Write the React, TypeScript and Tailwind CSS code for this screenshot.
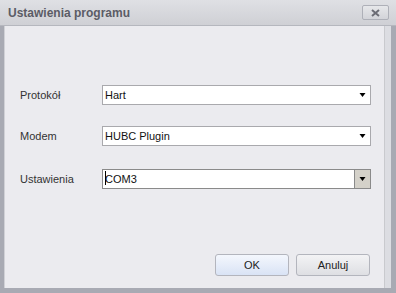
import React from "react";

function Arrow() {
  return (
    <svg width="7" height="4" viewBox="0 0 7 4" className="block">
      <path d="M0.5 0 H6.5 L3.5 4 Z" fill="#000" />
    </svg>
  );
}

function Field({ label, value, boxed, caret }: { label: string; value: string; boxed?: boolean; caret?: boolean }) {
  return (
    <div className="flex items-center h-[20px]">
      <div className="w-[97px] pl-[15px] text-[11px] text-[#333]">{label}</div>
      <div
        className={
          "flex h-[20px] w-[269px] items-center bg-white border " +
          (boxed ? "border-[#8a8a8a]" : "border-[#a9a9ad]")
        }
      >
        <div className="relative flex-1 pl-[2px] text-[11px] text-[#111] leading-none">
          {caret && <span className="absolute left-[2px] top-[-3px] h-[14px] w-[1px] bg-black" />}
          {value}
        </div>
        {boxed ? (
          <div className="flex h-full w-[16px] items-center justify-center border-l border-[#8a8a8a] bg-[#d4d1c9]">
            <Arrow />
          </div>
        ) : (
          <div className="flex h-full w-[16px] items-center justify-center">
            <Arrow />
          </div>
        )}
      </div>
    </div>
  );
}

export default function App() {
  return (
    <div
      className="w-[396px] h-[293px] bg-[#a8aab3] flex flex-col"
      style={{ fontFamily: '"Liberation Sans", Arial, sans-serif' }}
    >
      <div className="h-[26px] flex items-center justify-between bg-gradient-to-b from-[#dfe0e4] to-[#cfd0d5] pl-[8px] pr-[7px] mx-0 border-b border-[#b5b7be]">
        <span className="text-[12px] font-bold text-[#5b5c66]">Ustawienia programu</span>
        <div className="h-[15px] w-[27px] flex items-center justify-center rounded-[2px] border border-[#aeb0b8] bg-gradient-to-b from-[#e6e7ea] to-[#d3d4d9]">
          <svg width="9" height="8" viewBox="0 0 9 8">
            <path d="M1 1 L8 7 M8 1 L1 7" stroke="#6b6c75" strokeWidth="2" />
          </svg>
        </div>
      </div>
      <div className="flex flex-1 pl-[4px] pr-[5px] pb-[5px]">
        <div className="flex flex-1 bg-[#dcdde2] border-l border-[#d0d1d6]">
          <div className="flex-1 flex flex-col bg-[#ebebef] border-r border-[#c9cace] pt-[59px] pb-[12px]">
            <Field label="Protokół" value="Hart" />
            <div className="mt-[21px]">
              <Field label="Modem" value="HUBC Plugin" />
            </div>
            <div className="mt-[23px]">
              <Field label="Ustawienia" value="COM3" boxed caret />
            </div>
            <div className="flex-1" />
            <div className="flex gap-[7px] pl-[210px]">
              <button className="h-[22px] w-[74px] rounded-[3px] border border-[#b3b5bd] bg-gradient-to-b from-[#f4f7fd] to-[#d9e3f5] text-[11px] text-[#222]">
                OK
              </button>
              <button className="h-[22px] w-[74px] rounded-[3px] border border-[#b3b5bd] bg-gradient-to-b from-[#f3f3f5] to-[#dedfe3] text-[11px] text-[#222]">
                Anuluj
              </button>
            </div>
          </div>
          <div className="w-[6px]" />
        </div>
      </div>
    </div>
  );
}
